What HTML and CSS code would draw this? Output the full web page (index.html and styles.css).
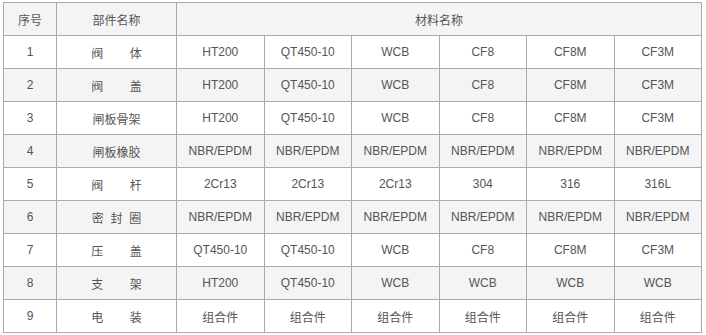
FILE: index.html
```html
<!DOCTYPE html>
<html lang="zh">
<head>
<meta charset="utf-8">
<link rel="stylesheet" href="styles.css">
</head>
<body>
<table class="spec">
  <colgroup>
    <col class="c-no"><col class="c-name"><col class="c-m"><col class="c-m"><col class="c-m"><col class="c-m"><col class="c-m"><col class="c-m">
  </colgroup>
  <tr class="alt">
    <td>序号</td><td>部件名称</td><td colspan="6">材料名称</td>
  </tr>
  <tr>
    <td>1</td><td>阀&nbsp;&nbsp;&nbsp;&nbsp;&nbsp;&nbsp;&nbsp;&nbsp;体</td><td>HT200</td><td>QT450-10</td><td>WCB</td><td>CF8</td><td>CF8M</td><td>CF3M</td>
  </tr>
  <tr class="alt">
    <td>2</td><td>阀&nbsp;&nbsp;&nbsp;&nbsp;&nbsp;&nbsp;&nbsp;&nbsp;盖</td><td>HT200</td><td>QT450-10</td><td>WCB</td><td>CF8</td><td>CF8M</td><td>CF3M</td>
  </tr>
  <tr>
    <td>3</td><td>闸板骨架</td><td>HT200</td><td>QT450-10</td><td>WCB</td><td>CF8</td><td>CF8M</td><td>CF3M</td>
  </tr>
  <tr class="alt">
    <td>4</td><td>闸板橡胶</td><td>NBR/EPDM</td><td>NBR/EPDM</td><td>NBR/EPDM</td><td>NBR/EPDM</td><td>NBR/EPDM</td><td>NBR/EPDM</td>
  </tr>
  <tr>
    <td>5</td><td>阀&nbsp;&nbsp;&nbsp;&nbsp;&nbsp;&nbsp;&nbsp;&nbsp;杆</td><td>2Cr13</td><td>2Cr13</td><td>2Cr13</td><td>304</td><td>316</td><td>316L</td>
  </tr>
  <tr class="alt">
    <td>6</td><td>密&nbsp;&nbsp;封&nbsp;&nbsp;圈</td><td>NBR/EPDM</td><td>NBR/EPDM</td><td>NBR/EPDM</td><td>NBR/EPDM</td><td>NBR/EPDM</td><td>NBR/EPDM</td>
  </tr>
  <tr>
    <td>7</td><td>压&nbsp;&nbsp;&nbsp;&nbsp;&nbsp;&nbsp;&nbsp;&nbsp;盖</td><td>QT450-10</td><td>QT450-10</td><td>WCB</td><td>CF8</td><td>CF8M</td><td>CF3M</td>
  </tr>
  <tr class="alt">
    <td>8</td><td>支&nbsp;&nbsp;&nbsp;&nbsp;&nbsp;&nbsp;&nbsp;&nbsp;架</td><td>HT200</td><td>QT450-10</td><td>WCB</td><td>WCB</td><td>WCB</td><td>WCB</td>
  </tr>
  <tr>
    <td>9</td><td>电&nbsp;&nbsp;&nbsp;&nbsp;&nbsp;&nbsp;&nbsp;&nbsp;装</td><td>组合件</td><td>组合件</td><td>组合件</td><td>组合件</td><td>组合件</td><td>组合件</td>
  </tr>
</table>
</body>
</html>
```
FILE: styles.css
```css
html, body {
  margin: 0;
  padding: 0;
  background: #fff;
}
body {
  padding: 2px 0 0 3px;
}
.spec {
  border-collapse: collapse;
  table-layout: fixed;
  width: 699px;
  font-family: "Liberation Sans", Arial, "Noto Sans CJK SC", sans-serif;
  font-size: 12px;
  color: #555;
}
.c-no { width: 53px; }
.c-name { width: 120px; }
.c-m { width: 87.5px; }
.spec td {
  border: 1px solid #aaa;
  height: 32px;
  padding: 0;
  text-align: center;
  vertical-align: middle;
  white-space: nowrap;
  box-sizing: border-box;
}
.spec tr { height: 33px; }
.spec tr.alt td {
  background: #f4f4f4;
}
```
